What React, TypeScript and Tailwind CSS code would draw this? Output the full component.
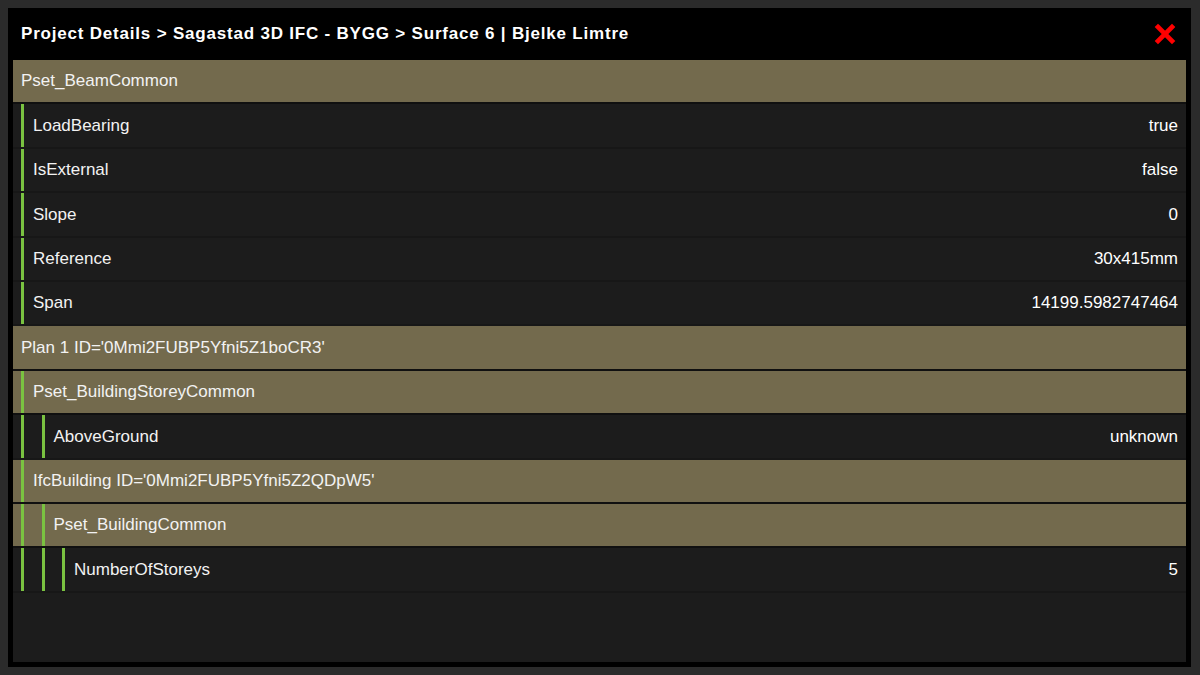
import { X } from "lucide-react";

type Row = {
  label: string;
  value?: string;
  depth: number;
  group?: boolean;
};

const rows: Row[] = [
  { label: "Pset_BeamCommon", depth: 0, group: true },
  { label: "LoadBearing", value: "true", depth: 1 },
  { label: "IsExternal", value: "false", depth: 1 },
  { label: "Slope", value: "0", depth: 1 },
  { label: "Reference", value: "30x415mm", depth: 1 },
  { label: "Span", value: "14199.5982747464", depth: 1 },
  { label: "Plan 1 ID='0Mmi2FUBP5Yfni5Z1boCR3'", depth: 0, group: true },
  { label: "Pset_BuildingStoreyCommon", depth: 1, group: true },
  { label: "AboveGround", value: "unknown", depth: 2 },
  { label: "IfcBuilding ID='0Mmi2FUBP5Yfni5Z2QDpW5'", depth: 1, group: true },
  { label: "Pset_BuildingCommon", depth: 2, group: true },
  { label: "NumberOfStoreys", value: "5", depth: 3 },
];

const DetailRow = ({ row }: { row: Row }) => {
  const bars = Array.from({ length: row.depth });
  return (
    <div
      className={`flex h-[44.4px] shrink-0 items-stretch border-b-2 px-2 ${
        row.group ? "border-[#101010] bg-[#736a4d]" : "border-[#171717] bg-[#1c1c1c]"
      }`}
    >
      {bars.map((_, i) => (
        <div
          key={i}
          className={`flex shrink-0 ${i === bars.length - 1 ? "w-[12px]" : "w-[20.5px]"}`}
        >
          <div className="w-[3px] bg-[#7ac241]" />
        </div>
      ))}
      <div className="flex flex-1 items-center justify-between">
        <span>{row.label}</span>
        {row.value && <span className="text-white">{row.value}</span>}
      </div>
    </div>
  );
};

export default function App() {
  return (
    <div
      className="h-[675px] w-[1200px] bg-[#2b2b2b] p-2 text-[17px] text-[#f2f2f2]"
      style={{ fontFamily: '"Liberation Sans", Arial, sans-serif' }}
    >
      <div className="flex h-[659px] w-[1183px] flex-col bg-black">
        <header className="flex h-[52px] shrink-0 items-center justify-between pl-[13px] pr-[12px]">
          <h1 className="text-[17px] font-bold tracking-[0.8px] text-white">
            Project Details &gt; Sagastad 3D IFC - BYGG &gt; Surface 6 | Bjelke Limtre
          </h1>
          <X className="h-[28px] w-[28px] text-[#ff0000]" strokeWidth={4} strokeLinecap="square" />
        </header>
        <div className="mx-[5px] mb-[5px] flex flex-1 flex-col bg-[#1c1c1c]">
          {rows.map((r, i) => (
            <DetailRow key={i} row={r} />
          ))}
        </div>
      </div>
    </div>
  );
}
